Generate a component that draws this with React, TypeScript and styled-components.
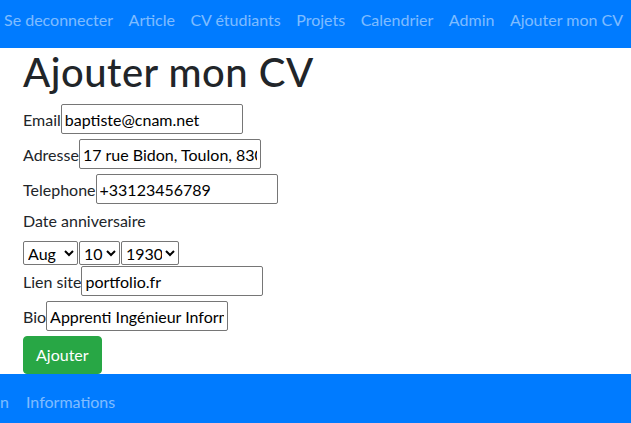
import React from "react";
import styled, { createGlobalStyle } from "styled-components";

const GlobalStyle = createGlobalStyle`
  html, body {
    margin: 0;
    padding: 0;
    background: #ffffff;
  }
  body {
    font-family: "Segoe UI", Lato, "Liberation Sans", sans-serif;
    font-size: 16px;
    line-height: 1.5;
    color: #212529;
    overflow: hidden;
  }
  * { box-sizing: border-box; }
`;

const NavBar = styled.nav`
  background: #007bff;
  height: 48px;
  display: flex;
  align-items: flex-start;
  gap: 15.5px;
  padding: 8px 0 0 4px;
  white-space: nowrap;
  overflow: hidden;
`;

const NavLink = styled.a`
  color: rgba(255, 255, 255, 0.5);
  text-decoration: none;
  line-height: 24px;
  flex-shrink: 0;
`;

const Main = styled.main`
  padding: 0 23px;
`;

const Title = styled.h1`
  margin: 0 0 8px;
  font-size: 40px;
  font-weight: 500;
  line-height: 48px;
  letter-spacing: 0.5px;
`;

const Row = styled.div`
  display: flex;
  align-items: baseline;
  height: 30px;
  margin-bottom: 5px;
`;

const Label = styled.label`
  line-height: 24px;
  white-space: nowrap;
`;

const BlockLabel = styled.label`
  display: block;
  line-height: 24px;
  margin-bottom: 8px;
`;

const TextInput = styled.input`
  width: 182px;
  height: 30px;
  border: 1px solid #767676;
  border-radius: 2px;
  padding: 0 3px;
  font: inherit;
  line-height: normal;
  color: #000;
  background: #fff;
`;

const SelectRow = styled.div`
  display: flex;
  gap: 1px;
  margin-bottom: 1px;
`;

const Select = styled.select<{ $w: number }>`
  width: ${(p) => p.$w}px;
  height: 24px;
  font: inherit;
  line-height: normal;
  color: #000;
  border: 1px solid #767676;
  border-radius: 2px;
  background: #fff;
  padding: 0;
`;

const SubmitButton = styled.button`
  display: inline-block;
  height: 38px;
  padding: 6px 12px;
  font: inherit;
  line-height: 24px;
  color: #fff;
  background: #28a745;
  border: 1px solid #28a745;
  border-radius: 4px;
`;

const Footer = styled.footer`
  background: #007bff;
  display: flex;
  align-items: flex-start;
  padding: 16px 0;
  overflow: hidden;
  white-space: nowrap;
`;

const ClippedStart = styled.div`
  width: 9px;
  display: flex;
  justify-content: flex-end;
  flex-shrink: 0;
  margin-right: 17px;
`;

const months = ["Jan", "Feb", "Mar", "Apr", "May", "Jun", "Jul", "Aug", "Sep", "Oct", "Nov", "Dec"];
const days = Array.from({ length: 31 }, (_, i) => String(i + 1));
const years = Array.from({ length: 100 }, (_, i) => String(1930 + i));

export default function App() {
  return (
    <>
      <GlobalStyle />
      <NavBar>
        <NavLink href="#">Se deconnecter</NavLink>
        <NavLink href="#">Article</NavLink>
        <NavLink href="#">CV étudiants</NavLink>
        <NavLink href="#">Projets</NavLink>
        <NavLink href="#">Calendrier</NavLink>
        <NavLink href="#">Admin</NavLink>
        <NavLink href="#">Ajouter mon CV</NavLink>
      </NavBar>
      <Main>
        <Title>Ajouter mon CV</Title>
        <form onSubmit={(e) => e.preventDefault()}>
          <Row>
            <Label htmlFor="email">Email</Label>
            <TextInput id="email" defaultValue="baptiste@cnam.net" />
          </Row>
          <Row>
            <Label htmlFor="adresse">Adresse</Label>
            <TextInput id="adresse" defaultValue="17 rue Bidon, Toulon, 83000" />
          </Row>
          <Row>
            <Label htmlFor="tel">Telephone</Label>
            <TextInput id="tel" defaultValue="+33123456789" />
          </Row>
          <BlockLabel>Date anniversaire</BlockLabel>
          <SelectRow>
            <Select $w={55} defaultValue="Aug">
              {months.map((m) => (
                <option key={m}>{m}</option>
              ))}
            </Select>
            <Select $w={41} defaultValue="10">
              {days.map((d) => (
                <option key={d}>{d}</option>
              ))}
            </Select>
            <Select $w={58} defaultValue="1930">
              {years.map((y) => (
                <option key={y}>{y}</option>
              ))}
            </Select>
          </SelectRow>
          <Row>
            <Label htmlFor="site">Lien site</Label>
            <TextInput id="site" defaultValue="portfolio.fr" />
          </Row>
          <Row>
            <Label htmlFor="bio">Bio</Label>
            <TextInput id="bio" defaultValue="Apprenti Ingénieur Informatique" />
          </Row>
          <SubmitButton type="submit">Ajouter</SubmitButton>
        </form>
      </Main>
      <Footer>
        <ClippedStart>
          <NavLink href="#">Connexion</NavLink>
        </ClippedStart>
        <NavLink href="#">Informations</NavLink>
      </Footer>
    </>
  );
}
